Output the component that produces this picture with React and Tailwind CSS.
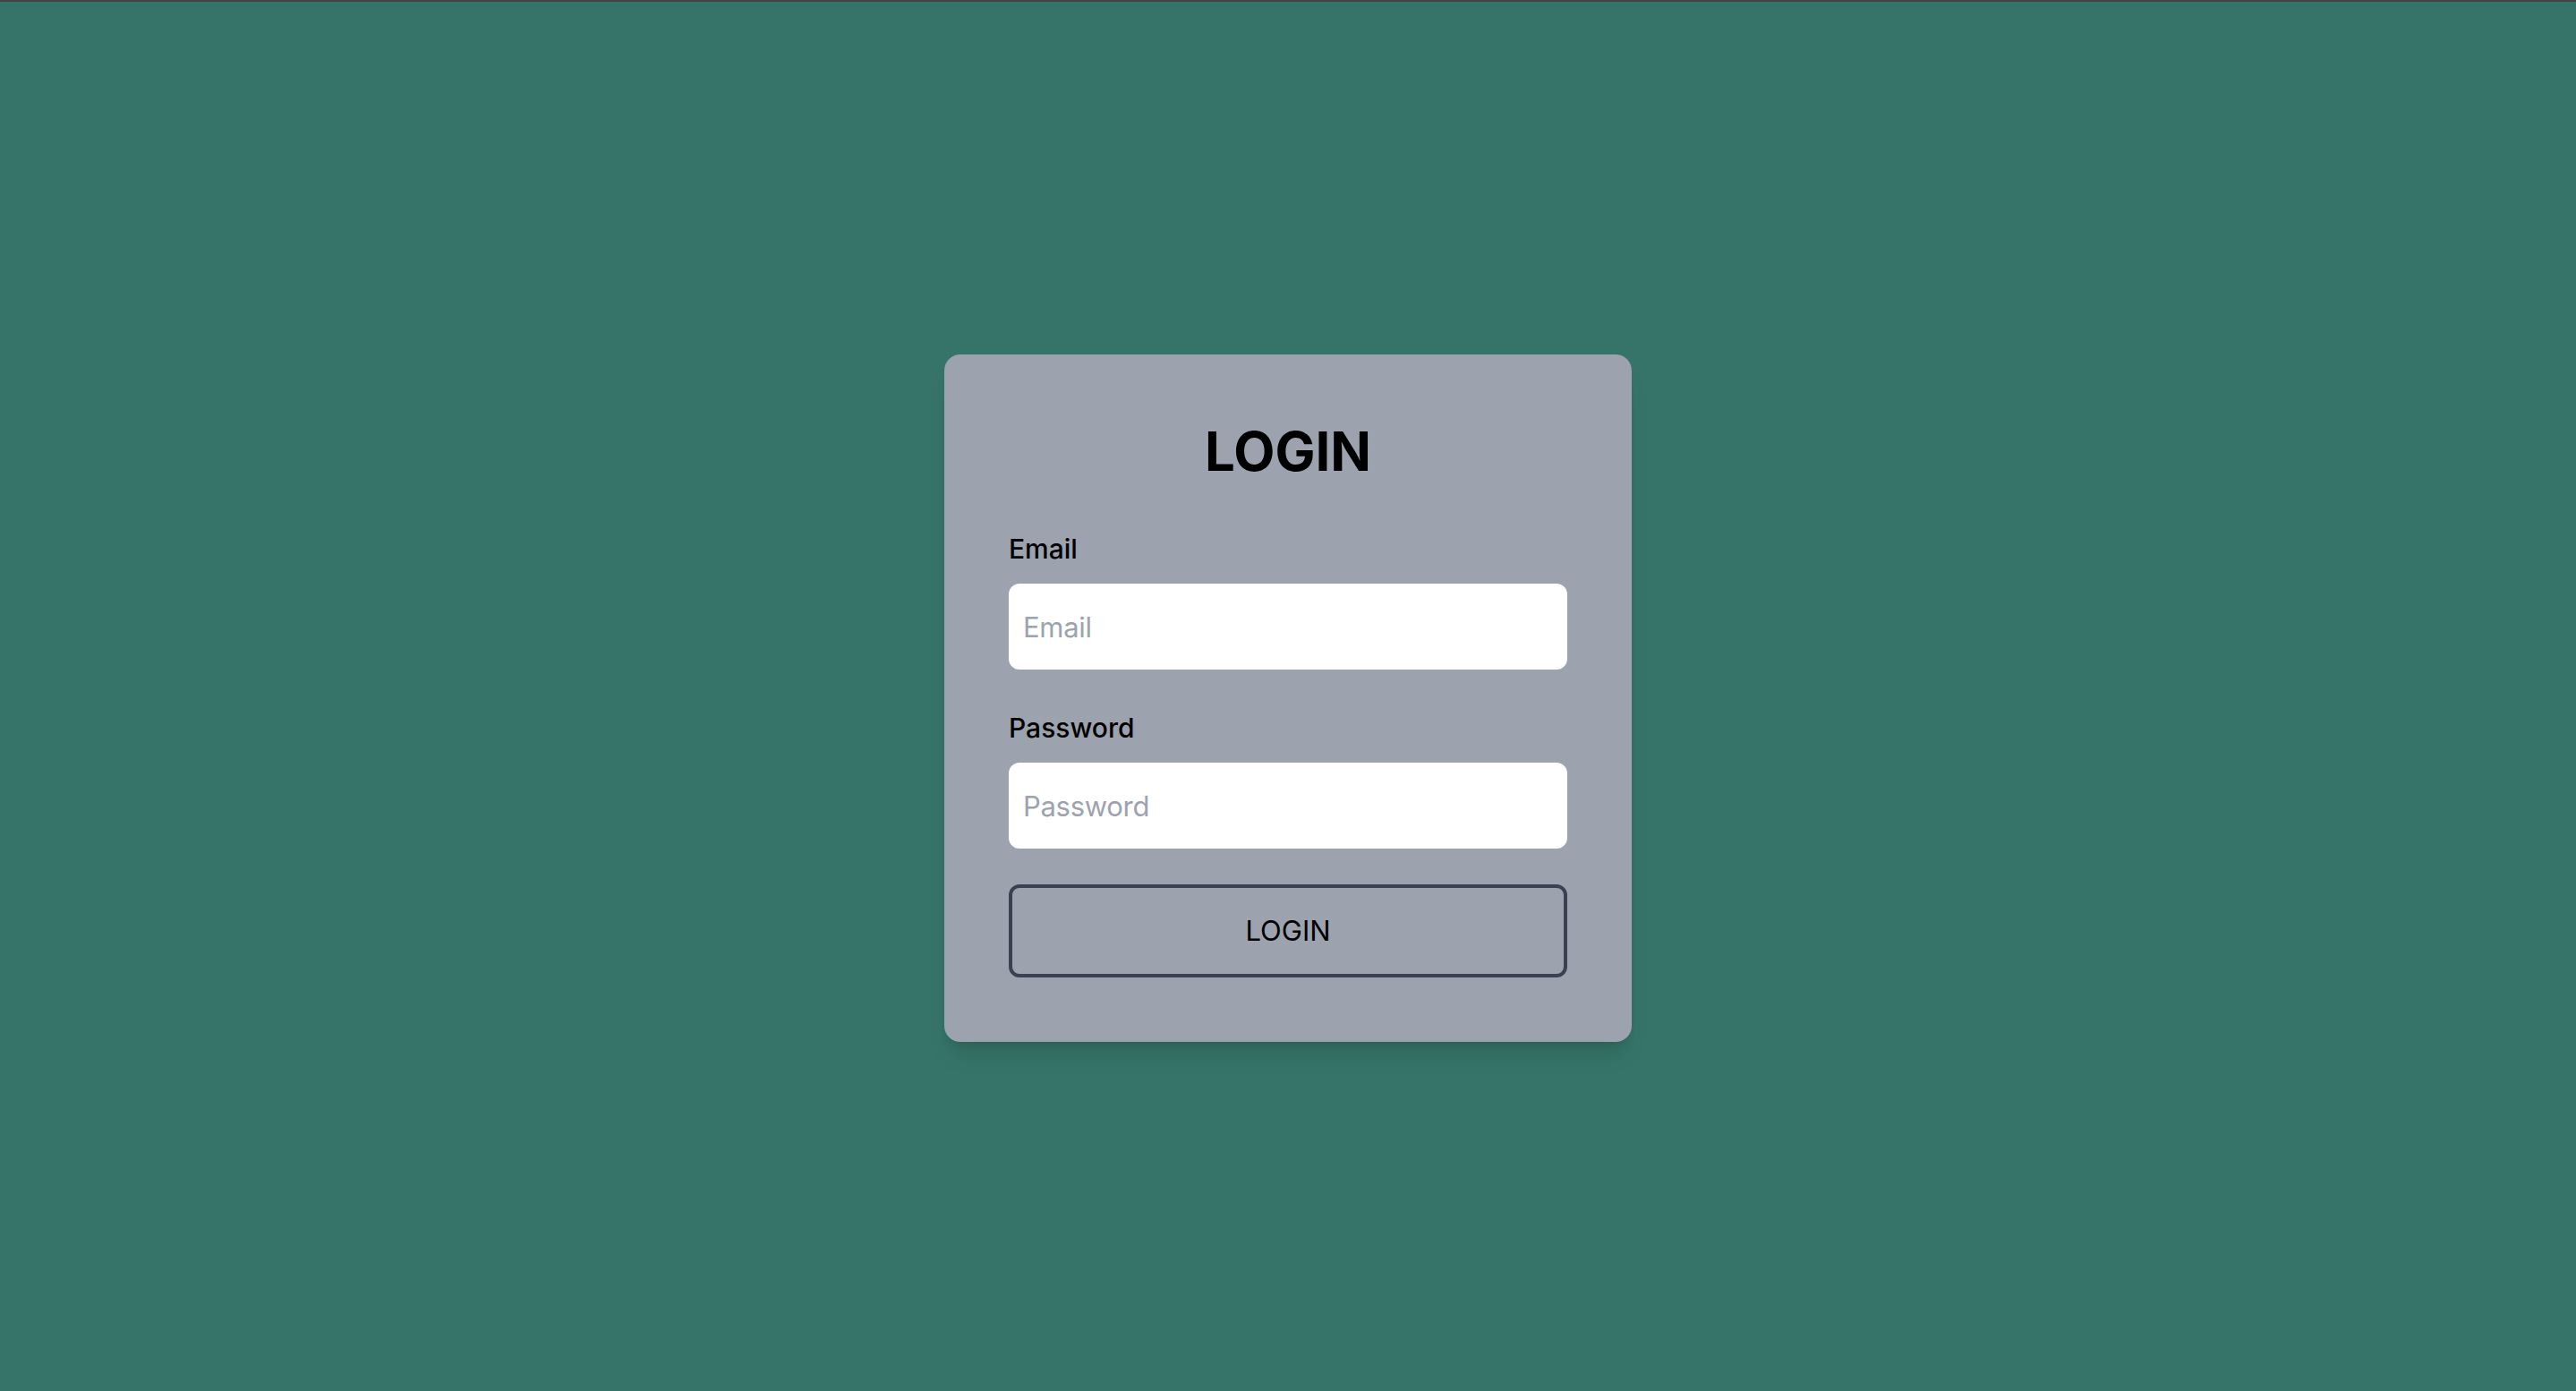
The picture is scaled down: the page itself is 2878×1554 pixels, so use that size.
export default function App() {
  return (
    <div
      className="min-h-screen bg-[#367469] border-t-2 border-[#444444] flex items-center justify-center"
      style={{ fontFamily: 'Inter, "Noto Sans", sans-serif' }}
    >
      <div className="w-[768px] mt-[4px] bg-[#9ca3af] rounded-[18px] shadow-xl p-[72px]">
        {/* Title */}
        <h1 className="text-center text-[60px] leading-[72px] font-bold text-black mb-[53px]">LOGIN</h1>

        {/* Email */}
        <label className="block text-[30px] leading-[40px] font-medium text-black mb-[19px]">Email</label>
        <input
          type="email"
          placeholder="Email"
          className="block w-full h-[96px] bg-white rounded-[12px] px-[16px] text-[31px] tracking-[-0.3px] text-gray-800 placeholder:text-[#9ca3af] outline-none mb-[45px]"
        />

        {/* Password */}
        <label className="block text-[30px] leading-[40px] font-medium text-black mb-[19px]">Password</label>
        <input
          type="password"
          placeholder="Password"
          className="block w-full h-[96px] bg-white rounded-[12px] px-[16px] text-[31px] tracking-[-0.3px] text-gray-800 placeholder:text-[#9ca3af] outline-none mb-[40px]"
        />

        <button className="block w-full h-[104px] border-4 border-[#3b4150] rounded-[12px] text-[31px] leading-[48px] text-black bg-transparent">
          LOGIN
        </button>
      </div>
    </div>
  );
}
